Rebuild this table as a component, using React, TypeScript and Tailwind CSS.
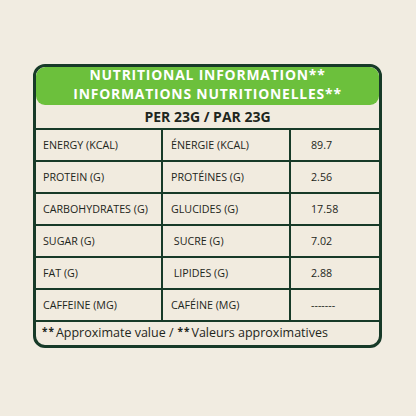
const rows = [
  { en: 'ENERGY (KCAL)', fr: 'ÉNERGIE (KCAL)', value: '89.7' },
  { en: 'PROTEIN (G)', fr: 'PROTÉINES (G)', value: '2.56' },
  { en: 'CARBOHYDRATES (G)', fr: 'GLUCIDES (G)', value: '17.58' },
  { en: 'SUGAR (G)', fr: ' SUCRE (G)', value: '7.02' },
  { en: 'FAT (G)', fr: ' LIPIDES (G)', value: '2.88' },
  { en: 'CAFFEINE (MG)', fr: 'CAFÉINE (MG)', value: '-------' },
];

export default function App() {
  return (
    <div
      className="w-[416px] h-[416px] bg-[#f1ece1] pt-[64px] pl-[33px]"
      style={{ fontFamily: '"Open Sans", "Noto Sans", sans-serif' }}
    >
      <div className="w-[349px] h-[284px] border-[3px] border-[#173a28] rounded-[12px] overflow-hidden bg-[#f1ebdf] flex flex-col text-[#1e2620]">
        <div className="h-[38px] shrink-0 bg-[#6cc03c] rounded-[9px] flex flex-col items-center justify-start text-white font-bold text-[13.9px] leading-[19px] tracking-[0.8px]">
          <div className="-mt-[2px]">NUTRITIONAL INFORMATION**</div>
          <div>INFORMATIONS NUTRITIONELLES**</div>
        </div>
        <div className="h-[25px] shrink-0 border-b-2 border-[#173a28] flex items-center justify-center font-bold text-[14px]">
          PER 23G / PAR 23G
        </div>
        {rows.map((r) => (
          <div key={r.en} className="h-[32px] border-b-2 border-[#173a28] flex text-[10.7px] font-medium shrink-0">
            <div className="w-[127px] border-r-2 border-[#173a28] flex items-center pl-[7px]">{r.en}</div>
            <div className="w-[128px] border-r-2 border-[#173a28] flex items-center pl-[8px] whitespace-pre">{r.fr}</div>
            <div className="flex-1 flex items-center pl-[20px]">{r.value}</div>
          </div>
        ))}
        <div className="flex-1 flex items-center pl-[6px] text-[12.5px] pb-[1px]">
          <span className="font-bold text-[10px] -mt-[4px] mr-[1px] tracking-[1px]">**</span>Approximate value /{' '}
          <span className="font-bold text-[10px] -mt-[4px] ml-[4px] mr-[1px] tracking-[1px]">**</span>Valeurs approximatives
        </div>
      </div>
    </div>
  );
}
